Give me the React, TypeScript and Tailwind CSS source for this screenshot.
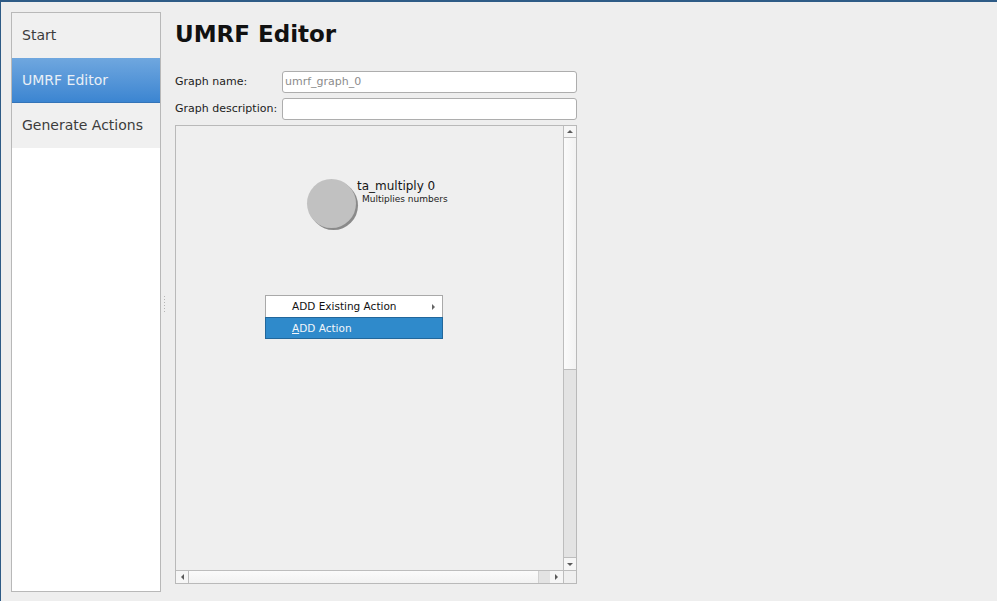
import React from "react";

const navItems = ["Start", "UMRF Editor", "Generate Actions"];

function Sidebar({ active }: { active: string }) {
  return (
    <div className="mt-[10px] ml-[10px] w-[150px] h-[580px] border border-[#b8b8b8] bg-white flex flex-col shrink-0">
      {navItems.map((item) => (
        <div
          key={item}
          className={`h-[45px] pl-[10px] flex items-center text-[14px] ${
            item === active
              ? "bg-gradient-to-b from-[#6fa7df] to-[#3b85d1] text-[#e9eff6] border-b border-[#3474b8]"
              : "bg-[#f0f0f0] text-[#3c3c3c]"
          }`}
        >
          {item}
        </div>
      ))}
    </div>
  );
}

function Splitter() {
  return (
    <div className="w-[14px] shrink-0 mt-[10px] h-[580px] flex flex-col justify-center pl-[3px]">
      <div className="flex flex-col gap-[2px] mt-[3px]">
        {[0, 1, 2, 3, 4, 5].map((i) => (
          <div key={i} className="w-[1px] h-[1px] bg-[#b5b5b5]" />
        ))}
      </div>
    </div>
  );
}

function Field({ label, value, placeholder }: { label: string; value?: string; placeholder?: string }) {
  return (
    <div className="flex items-center h-[22px]">
      <div className="w-[107px] text-[11px] text-[#1c1c1c]">{label}</div>
      <div className="w-[295px] h-[22px] rounded-[3px] border border-[#adadad] bg-white flex items-center pl-[2px] text-[11px]">
        {value ? (
          <span className="text-[#222]">{value}</span>
        ) : (
          <span className="text-[#8c8c8c]">{placeholder}</span>
        )}
      </div>
    </div>
  );
}

function Arrow({ dir }: { dir: "up" | "down" | "left" | "right" }) {
  const pts = {
    up: "1,4 4,1 7,4",
    down: "1,1 4,4 7,1",
    left: "4,1 1,4 4,7",
    right: "1,1 4,4 1,7",
  }[dir];
  const size = dir === "up" || dir === "down" ? { w: 8, h: 5 } : { w: 5, h: 8 };
  return (
    <svg width={size.w} height={size.h} viewBox={`0 0 ${size.w} ${size.h}`}>
      <polygon points={pts} fill="#5a5a5a" />
    </svg>
  );
}

function GraphCanvas() {
  return (
    <div className="w-[402px] h-[459px] border border-[#b9b9b9] flex flex-col">
      <div className="flex-1 flex">
        {/* drawing area */}
        <div className="flex-1 relative bg-[#efefef]">
          <div className="absolute left-[131px] top-[53px] w-[49px] h-[49px] rounded-full bg-[#c1c1c1] shadow-[2px_2px_0_#8a8a8a]" />
          <div className="absolute left-[181px] top-[53px] text-[12px] leading-[14px] text-[#151515]">ta_multiply 0</div>
          <div className="absolute left-[186px] top-[68px] text-[9px] leading-[11px] text-[#222]">Multiplies numbers</div>

          {/* context menu */}
          <div className="absolute left-[89px] top-[169px] w-[178px] flex flex-col text-[10.5px]">
            <div className="h-[22px] border border-b-0 border-[#a9a9a9] bg-white flex items-center pl-[26px] pr-[7px] text-[#111]">
              <span className="flex-1">ADD Existing Action</span>
              <svg width="3" height="6" viewBox="0 0 3 6">
                <polygon points="0,0 3,3 0,6" fill="#666" />
              </svg>
            </div>
            <div className="h-[22px] border border-[#22679b] bg-[#2f8acb] flex items-center pl-[26px] pt-[1px] text-[#f2f6fa]">
              <span>
                <span className="underline">A</span>DD Action
              </span>
            </div>
          </div>
        </div>
        {/* vertical scrollbar */}
        <div className="w-[13px] border-l border-[#bdbdbd] flex flex-col">
          <div className="h-[12px] border-b border-[#bdbdbd] bg-[#f6f6f6] flex items-center justify-center">
            <Arrow dir="up" />
          </div>
          <div className="h-[232px] border-b border-[#bdbdbd] bg-gradient-to-r from-[#fbfbfb] to-[#f2f2f2]" />
          <div className="flex-1 bg-[#e3e3e3]" />
          <div className="h-[13px] border-t border-[#bdbdbd] bg-[#f6f6f6] flex items-center justify-center">
            <Arrow dir="down" />
          </div>
        </div>
      </div>
      {/* horizontal scrollbar */}
      <div className="h-[13px] border-t border-[#bdbdbd] flex">
        <div className="w-[13px] border-r border-[#bdbdbd] bg-[#f6f6f6] flex items-center justify-center">
          <Arrow dir="left" />
        </div>
        <div className="flex-1 bg-gradient-to-b from-[#fbfbfb] to-[#f2f2f2]" />
        <div className="w-[12px] bg-[#e3e3e3] border-l border-[#d0d0d0]" />
        <div className="w-[13px] bg-[#f6f6f6] flex items-center justify-center">
          <Arrow dir="right" />
        </div>
        <div className="w-[13px] border-l border-[#bdbdbd] bg-[#efefef]" />
      </div>
    </div>
  );
}

export default function App() {
  return (
    <div className="w-[997px] h-[601px] bg-[#eeeeee] border-t-2 border-l border-[#2e5b86] flex font-['DejaVu_Sans',sans-serif] overflow-hidden">
      <Sidebar active="UMRF Editor" />
      <Splitter />
      <div className="pt-[19px] flex flex-col">
        <h1 className="text-[23px] leading-[27px] font-bold text-[#111]">UMRF Editor</h1>
        <div className="mt-[23px] flex flex-col gap-[5px]">
          <Field label="Graph name:" placeholder="umrf_graph_0" />
          <Field label="Graph description:" />
          <GraphCanvas />
        </div>
      </div>
    </div>
  );
}
